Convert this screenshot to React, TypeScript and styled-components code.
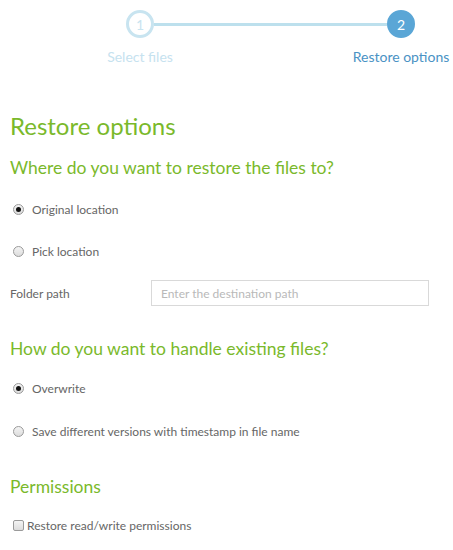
import React, { useState } from "react";
import styled, { createGlobalStyle } from "styled-components";

const GlobalStyle = createGlobalStyle`
  body {
    margin: 0;
    background: #ffffff;
    font-family: Lato, "Open Sans", sans-serif;
  }
`;

const Page = styled.div`
  width: 453px;
  padding: 10px 0 0 10px;
  box-sizing: border-box;
`;

// Stepper
const Stepper = styled.div`
  display: flex;
  margin-left: 80px;
  width: 361px;
`;

const Step = styled.div`
  width: 100px;
  display: flex;
  flex-direction: column;
  align-items: center;
  position: relative;
  z-index: 1;
`;

const Circle = styled.div<{ $active?: boolean }>`
  width: 28px;
  height: 28px;
  box-sizing: border-box;
  border-radius: 50%;
  display: flex;
  align-items: center;
  justify-content: center;
  font-size: 14px;
  background: ${(p) => (p.$active ? "#5aa6d6" : "#ffffff")};
  border: 3px solid ${(p) => (p.$active ? "#5aa6d6" : "#c8e4f0")};
  color: ${(p) => (p.$active ? "#ffffff" : "#c8e4f0")};
`;

const StepLabel = styled.div<{ $active?: boolean }>`
  margin-top: 10px;
  font-size: 14px;
  white-space: nowrap;
  color: ${(p) => (p.$active ? "#4a92c4" : "#c6e2ef")};
`;

const Connector = styled.div`
  flex: 1;
  height: 3px;
  margin: 13px -36px 0;
  background: #bde0ed;
`;

// Content
const Title = styled.h1`
  margin: 45px 0 0;
  font-size: 24px;
  font-weight: 400;
  line-height: 32px;
  color: #7ab92b;
`;

const SectionTitle = styled.h2<{ $top: number }>`
  margin: ${(p) => p.$top}px 0 0;
  font-size: 17.5px;
  font-weight: 400;
  line-height: 26px;
  color: #7ab92b;
`;

const OptionRow = styled.label<{ $top: number }>`
  display: flex;
  align-items: center;
  margin-top: ${(p) => p.$top}px;
  padding-left: 3px;
  height: 16px;
  font-size: 12px;
  color: #666666;
  cursor: pointer;
`;

const RadioDot = styled.span<{ $checked?: boolean }>`
  width: 11px;
  height: 11px;
  box-sizing: border-box;
  border-radius: 50%;
  border: 1px solid #9a9a9a;
  background: linear-gradient(#f4f4f4, #dcdcdc);
  margin-right: 8px;
  display: flex;
  align-items: center;
  justify-content: center;

  &::after {
    content: "";
    width: 5px;
    height: 5px;
    border-radius: 50%;
    background: #111111;
    display: ${(p) => (p.$checked ? "block" : "none")};
  }
`;

const CheckBox = styled.span`
  width: 11px;
  height: 11px;
  box-sizing: border-box;
  border-radius: 2px;
  border: 1px solid #9a9a9a;
  background: linear-gradient(#f4f4f4, #dcdcdc);
  margin-right: 3px;
`;

const FieldRow = styled.div`
  display: flex;
  align-items: center;
  margin-top: 21px;
`;

const FieldLabel = styled.div`
  width: 141px;
  font-size: 12px;
  color: #666666;
`;

const PathInput = styled.input`
  width: 278px;
  height: 26px;
  box-sizing: border-box;
  border: 1px solid #d9d9d9;
  padding: 0 9px;
  font-family: inherit;
  font-size: 12px;
  color: #555555;
  outline: none;

  &::placeholder {
    color: #b9b9b9;
  }
`;

export default function App() {
  const [location, setLocation] = useState("original");
  const [existing, setExisting] = useState("overwrite");
  const [perms, setPerms] = useState(false);

  return (
    <Page>
      <GlobalStyle />
      <Stepper>
        <Step>
          <Circle>1</Circle>
          <StepLabel>Select files</StepLabel>
        </Step>
        <Connector />
        <Step>
          <Circle $active>2</Circle>
          <StepLabel $active>Restore options</StepLabel>
        </Step>
      </Stepper>

      <Title>Restore options</Title>

      <SectionTitle $top={13}>Where do you want to restore the files to?</SectionTitle>
      <OptionRow $top={20} onClick={() => setLocation("original")}>
        <RadioDot $checked={location === "original"} />
        Original location
      </OptionRow>
      <OptionRow $top={26} onClick={() => setLocation("pick")}>
        <RadioDot $checked={location === "pick"} />
        Pick location
      </OptionRow>
      <FieldRow>
        <FieldLabel>Folder path</FieldLabel>
        <PathInput placeholder="Enter the destination path" />
      </FieldRow>

      <SectionTitle $top={30}>How do you want to handle existing files?</SectionTitle>
      <OptionRow $top={18} onClick={() => setExisting("overwrite")}>
        <RadioDot $checked={existing === "overwrite"} />
        Overwrite
      </OptionRow>
      <OptionRow $top={27} onClick={() => setExisting("versions")}>
        <RadioDot $checked={existing === "versions"} />
        Save different versions with timestamp in file name
      </OptionRow>

      <SectionTitle $top={35}>Permissions</SectionTitle>
      <OptionRow $top={17} onClick={() => setPerms(!perms)}>
        <CheckBox />
        Restore read/write permissions
      </OptionRow>
    </Page>
  );
}
